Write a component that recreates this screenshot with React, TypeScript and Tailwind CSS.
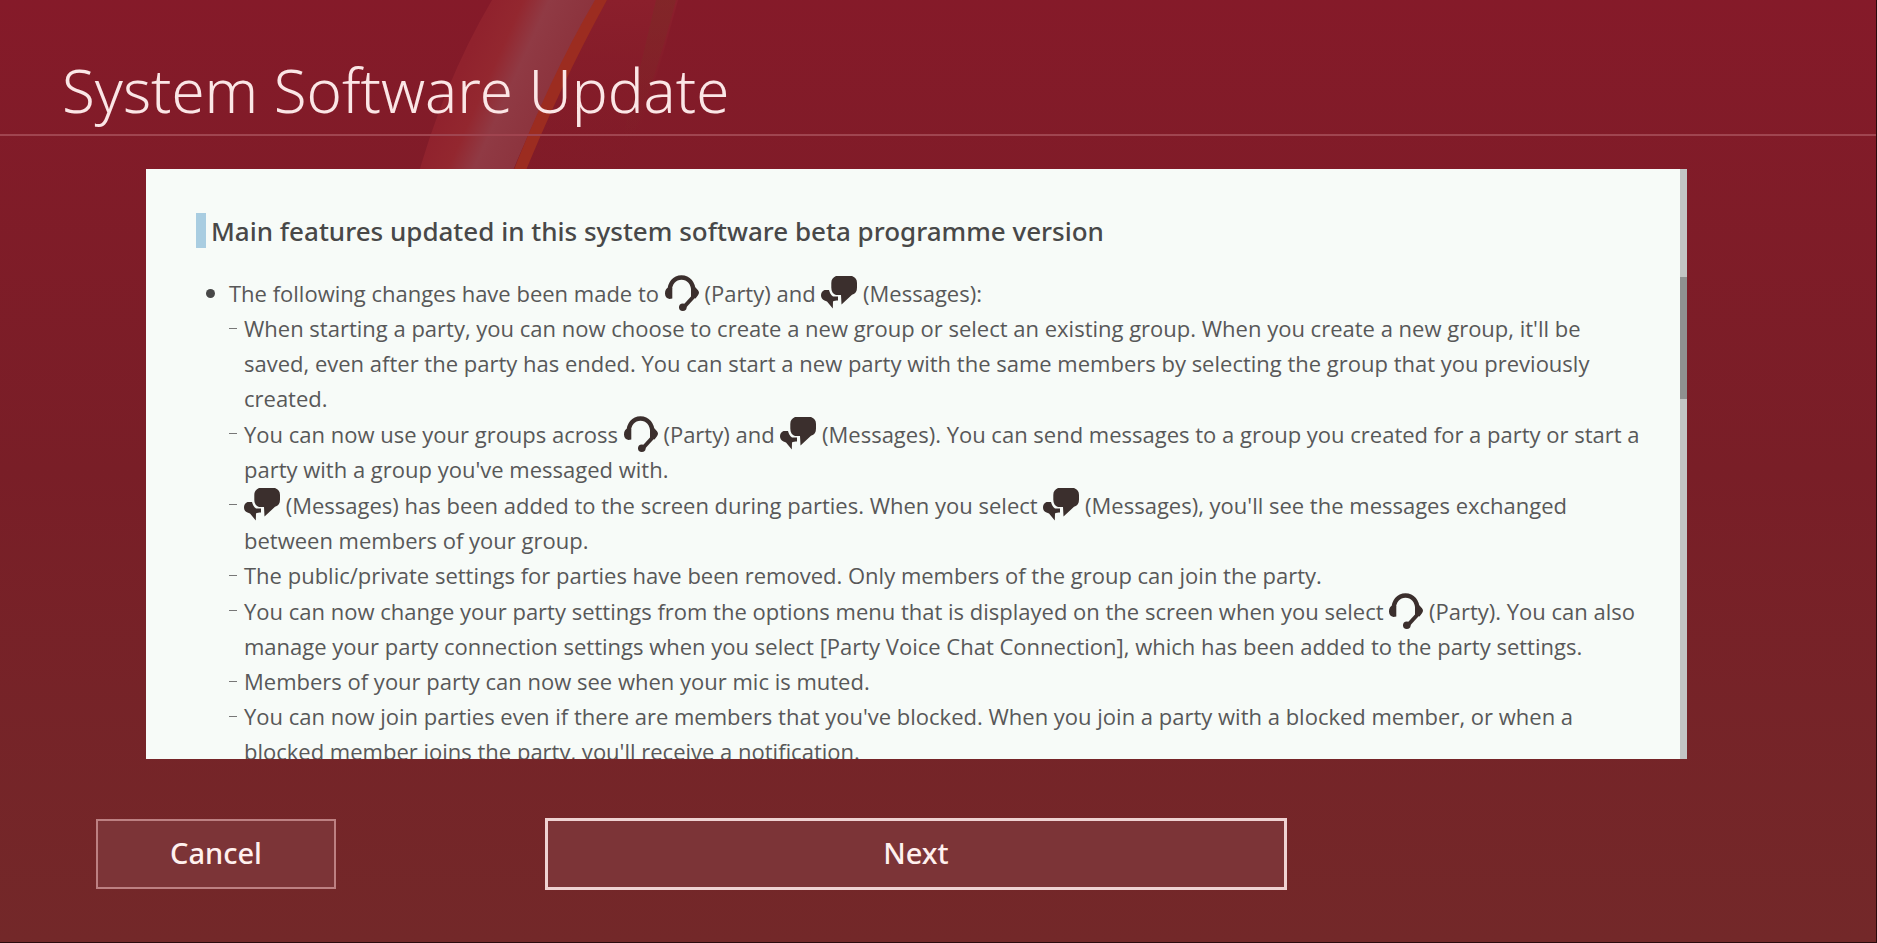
import type { ReactNode } from "react";

function PartyIcon() {
  return (
    <svg viewBox="0 0 34 36" className="-mb-[4px] inline-block h-[36px] w-[34px] align-[-5px]" role="img" aria-label="Party">
      <path d="M4.500 17C4.500 8 9.500 2.500 16.500 2.500S28.500 8 28.500 17" fill="none" stroke="#3b2f2d" strokeWidth="4.600" />
      <path d="M7.300 13V23.500L4.500 24C1.500 23.500 0 21.500 0 18.500S1 14 2.500 13ZM26 12.500V22L30.500 23.500C32 21.500 34 19.500 34 17.800S32.500 14.500 30.500 12.500Z" fill="#3b2f2d" />
      <path d="M29.500 20.500 19 32" stroke="#3b2f2d" strokeWidth="4" />
      <circle cx="17.800" cy="32.200" r="3.800" fill="#3b2f2d" />
    </svg>
  );
}

function MessagesIcon() {
  return (
    <svg viewBox="0 0 36 33" className="mt-px -mb-[4px] inline-block h-[33px] w-[36px] align-[-3px]" role="img" aria-label="Messages">
      <path d="M15 0H31C34.500 1.300 36 3.500 36 7V11.500C36 15.500 34.500 17.800 31 18.800L20.500 28.500L20 19H15C12 18 10.300 15.500 10.300 11.500V7C10.300 3.500 12 1.300 15 0Z" fill="#3b2f2d" />
      <path d="M3.500 14H8C8.800 17 9.800 19 12 20.500H17V24.500C15.500 24.600 12.800 24.800 12 25.500L11.800 32.500L6 25.500L3.500 24.500C1 23.500 0 21.500 0 19.300S1 15 3.500 14Z" fill="#3b2f2d" />
    </svg>
  );
}

function Dash({ children }: { children: ReactNode }) {
  return (
    <li className="flex">
      <span aria-hidden="true" className="mt-[17px] mr-[7px] h-px w-[8px] shrink-0 bg-[#777]" />
      <span>{children}</span>
    </li>
  );
}

export default function App() {
  return (
    <div className="relative flex h-screen flex-col overflow-hidden border-r border-b border-[#2a0a0c] bg-linear-to-b from-[#851a29] via-[#791e27] via-50% to-[#732829] font-['Noto_Sans','Open_Sans',sans-serif]">
      <svg viewBox="0 0 300 190" className="absolute top-0 left-[400px] h-[190px] w-[300px]" aria-hidden="true">
        <defs>
          <linearGradient id="beam" gradientUnits="userSpaceOnUse" x1="92" y1="0" x2="179" y2="39">
            <stop offset="0" stopColor="#90222d" />
            <stop offset="0.300" stopColor="#93272f" />
            <stop offset="0.550" stopColor="#903a44" />
            <stop offset="1" stopColor="#8c333d" />
          </linearGradient>
          <linearGradient id="glow" x1="0" x2="0" y1="0" y2="1">
            <stop offset="0" stopColor="#8b1f2c" />
            <stop offset="1" stopColor="#7e1b26" stopOpacity="0" />
          </linearGradient>
          <linearGradient id="edge" x1="0" x2="0" y1="0" y2="1">
            <stop offset="0" stopColor="#7c2a26" stopOpacity="0.600" />
            <stop offset="1" stopColor="#7c2a26" stopOpacity="0" />
          </linearGradient>
        </defs>
        <path d="M207 0H278Q254 90 220 190H105Q150 90 207 0Z" fill="url(#glow)" />
        <path d="M256 0H276Q258 70 232 140H222Q240 70 256 0Z" fill="url(#edge)" />
        <path d="M92 0H197Q145 90 105 190H14Q42 85 92 0Z" fill="url(#beam)" />
        <path d="M195 0H207Q160 85 118 190H106Q148 80 195 0Z" fill="#9c2c20" />
      </svg>

      <header className="relative flex h-[136px] shrink-0 items-end border-b-2 border-[#a04550] pl-[62px]">
        <h1 className="pb-[4px] text-[60px] leading-[80px] font-light text-[#fbe6e6]">System Software Update</h1>
      </header>

      <main className="relative mt-[33px] mr-[189px] ml-[146px] flex min-h-0 flex-1 bg-[#f7fbf8]">
        <div className="min-w-0 flex-1 overflow-hidden pt-[44px] pl-[50px] text-[#585858]">
          <h2 className="border-l-[10px] border-[#a9cde1] pt-[2px] pl-[5px] text-[26px] leading-[33px] font-medium text-[#484848]">
            Main features updated in this system software beta programme version
          </h2>
          <div className="mt-[27px] pl-[10px] font-['Open_Sans','Noto_Sans',sans-serif] text-[22px] leading-[35px]">
            <div className="flex items-center">
              <span aria-hidden="true" className="mr-[14px] size-[9px] rounded-full bg-[#484848]" />
              <p>
                The following changes have been made to <PartyIcon /> (Party) and <MessagesIcon /> (Messages):
              </p>
            </div>
            <ul className="pl-[23px] whitespace-nowrap">
              <Dash>
                When starting a party, you can now choose to create a new group or select an existing group. When you create a new group, it'll be
                <br />
                saved, even after the party has ended. You can start a new party with the same members by selecting the group that you previously
                <br />
                created.
              </Dash>
              <Dash>
                You can now use your groups across <PartyIcon /> (Party) and <MessagesIcon /> (Messages). You can send messages to a group you created for a party or start a
                <br />
                party with a group you've messaged with.
              </Dash>
              <Dash>
                <MessagesIcon /> (Messages) has been added to the screen during parties. When you select <MessagesIcon /> (Messages), you'll see the messages exchanged
                <br />
                between members of your group.
              </Dash>
              <Dash>The public/private settings for parties have been removed. Only members of the group can join the party.</Dash>
              <Dash>
                You can now change your party settings from the options menu that is displayed on the screen when you select <PartyIcon /> (Party). You can also
                <br />
                manage your party connection settings when you select [Party Voice Chat Connection], which has been added to the party settings.
              </Dash>
              <Dash>Members of your party can now see when your mic is muted.</Dash>
              <Dash>
                You can now join parties even if there are members that you've blocked. When you join a party with a blocked member, or when a
                <br />
                blocked member joins the party, you'll receive a notification.
              </Dash>
            </ul>
          </div>
        </div>
        <div aria-hidden="true" className="flex w-[7px] flex-col bg-[#c2c4c4] pt-[108px]">
          <div className="h-[122px] bg-[#8f9090]" />
        </div>
      </main>

      <footer className="relative mt-[59px] mb-[52px] flex shrink-0 items-center pl-[96px] text-[29px] text-[#fff0ee]">
        <button type="button" className="h-[70px] w-[240px] border-2 border-[#bd8082] bg-[#7c3437] pb-[2px] font-medium">
          Cancel
        </button>
        <button type="button" className="ml-[209px] h-[72px] w-[742px] border-3 border-[#efd2d2] bg-[#7c3437] pb-[2px] font-medium">
          Next
        </button>
      </footer>
    </div>
  );
}
